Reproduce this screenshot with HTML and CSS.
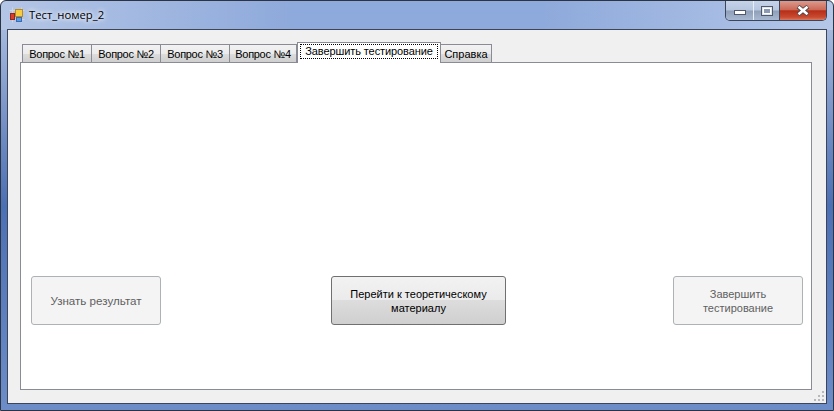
FILE: index.html
```html
<!DOCTYPE html>
<html lang="ru">
<head>
<meta charset="utf-8">
<title>Тест_номер_2</title>
<link rel="stylesheet" href="styles.css">
</head>
<body>
<div class="window">
  <header class="titlebar">
    <svg class="app-icon" width="16" height="16" viewBox="0 0 16 16">
      <path d="M0.5 3.5H15.5M0.5 12.5H15.5M3.5 0.5V15.5M12.5 0.5V15.5" stroke="#d4d4dc" stroke-width="1" fill="none"/>
      <rect x="1.5" y="6.5" width="4" height="6" fill="#e03a2c" stroke="#8c2a20"/>
      <rect x="6.5" y="2.5" width="7" height="7" fill="#f8cc40" stroke="#b88a20"/>
      <rect x="7.5" y="10.5" width="5" height="4" fill="#5a9ae8" stroke="#3a6ab0"/>
    </svg>
    <span class="title">Тест_номер_2</span>
    <div class="caption">
      <div class="cap cap-min"><svg width="12" height="6" viewBox="0 0 12 6"><rect x="0.5" y="0.5" width="11" height="4" fill="#fff" stroke="#50586a"/></svg></div>
      <div class="cap cap-max"><svg width="12" height="10" viewBox="0 0 12 10"><rect x="0.5" y="0.5" width="11" height="9" fill="#dfe5ee" stroke="#50586a"/><rect x="2.5" y="2.5" width="7" height="5" fill="#8a9ab2" stroke="#fff"/></svg></div>
      <div class="cap cap-close"><svg width="14" height="11" viewBox="0 0 14 11"><path d="M2 1.5 L12 9.5 M12 1.5 L2 9.5" stroke="#50484a" stroke-width="4.4" fill="none"/><path d="M2.5 1.8 L11.5 9.2 M11.5 1.8 L2.5 9.2" stroke="#fff" stroke-width="2.6" fill="none"/></svg></div>
    </div>
  </header>
  <main class="client">
    <nav class="tabs">
      <div class="tab t1">Вопрос №1</div>
      <div class="tab t2">Вопрос №2</div>
      <div class="tab t3">Вопрос №3</div>
      <div class="tab t4">Вопрос №4</div>
      <div class="tab active"><span class="focus">Завершить тестирование</span></div>
      <div class="tab t6">Справка</div>
    </nav>
    <section class="panel">
      <button class="btn disabled b1">Узнать результат</button>
      <button class="btn primary b2">Перейти к теоретическому материалу</button>
      <button class="btn disabled b3">Завершить тестирование</button>
    </section>
    <svg class="grip" width="12" height="12" viewBox="0 0 12 12">
      <path d="M9 1h2v2H9zM5 5h2v2H5zM9 5h2v2H9zM1 9h2v2H1zM5 9h2v2H5zM9 9h2v2H9z" fill="#b8b8bc"/>
    </svg>
  </main>
</div>
</body>
</html>
```
FILE: styles.css
```css
* { box-sizing: border-box; }
html, body { margin: 0; height: 100%; overflow: hidden; }
body { width: 834px; height: 411px; background: #fff; font-family: "Liberation Sans", Arial, sans-serif; font-size: 11px; color: #000; }

.window {
  width: 834px; height: 411px;
  display: flex; flex-direction: column;
  border: 1px solid #2c3444;
  border-radius: 6px 6px 0 0;
  padding: 0 6px 6px 6px;
  background:
    linear-gradient(90deg, #b4c6e6 0, #8ea9db 35%, #8ea9db 65%, #b4c7e8 100%) top / 100% 29px no-repeat,
    linear-gradient(180deg, #b4c6e6 0, #7e98ca 25%, #4c70b4 50%, #6d8dc8 100%);
}

.titlebar { height: 28px; flex: none; display: flex; align-items: center; position: relative; padding-left: 2px; }
.app-icon { flex: none; margin-top: -1px; }
.title { margin-left: 4px; font-family: "Open Sans", sans-serif; font-size: 11.3px; margin-top: -2px; color: #000; text-shadow: 0 0 6px #fff, 0 0 4px #fff; white-space: nowrap; }

.caption { margin-left: auto; align-self: flex-start; display: flex; height: 20px; border: 1px solid #3c4658; border-top: 0; border-radius: 0 0 5px 5px; overflow: hidden; }
.cap { display: flex; align-items: center; justify-content: center; height: 100%; }
.cap-min { width: 28px; background: linear-gradient(180deg, #c6d4e8 0, #b6c6de 48%, #8f9fb8 52%, #a8b8d0 100%); border-right: 1px solid #e8eef8; }
.cap-min svg { margin-top: 5px; }
.cap-max { width: 26px; background: linear-gradient(180deg, #c6d4e8 0, #b6c6de 48%, #8f9fb8 52%, #a8b8d0 100%); border-right: 1px solid #3c4658; }
.cap-close { width: 46px; background: linear-gradient(180deg, #dc9a8c 0, #cc6a58 45%, #b82e18 52%, #c84a30 85%, #d87a60 100%); }

.client {
  flex: 1; position: relative;
  background: #f0f0f0;
  border: 1px solid #3c4658;
  padding: 13px 14px 13px 12px;
  display: flex; flex-direction: column;
}

.tabs { height: 20px; flex: none; display: flex; align-items: flex-end; padding-left: 2px; position: relative; z-index: 1; margin-bottom: -1px; white-space: nowrap; }
.tab {
  height: 18px; margin-bottom: 1px;
  display: flex; align-items: center; justify-content: center;
  border: 1px solid #898c95; border-bottom: 0; border-right-width: 0;
  background: linear-gradient(180deg, #f2f2f2 0, #ebebeb 50%, #dddddd 51%, #cfcfcf 100%);
  padding-top: 1px;
}
.t1, .t2, .t3 { width: 69px; letter-spacing: -0.3px; }
.t4 { width: 68px; border-right-width: 1px; letter-spacing: -0.3px; }
.t6 { width: 51px; border-right-width: 1px; border-left: 0; }
.active {
  width: 144px; height: 21px; margin-bottom: 0;
  background: #fff; border-right-width: 1px; padding: 0 2px 3px;
}
.focus { flex: 1; height: 15px; line-height: 13px; text-align: center; border: 1px dotted #000; letter-spacing: -0.1px; }

.panel {
  flex: 1; background: #fff;
  border: 1px solid #898c95;
  padding: 213px 0 0 10px;
  display: flex; align-items: flex-start;
}

.btn {
  height: 49px; font: inherit; padding: 0 12px; line-height: 14px;
  border-radius: 3px; text-align: center;
}
.b1, .b3 { width: 130px; }
.b1 { font-size: 11.6px; }
.b2 { width: 175px; margin: 0 167px 0 170px; }
.disabled { background: #f4f4f4; border: 1px solid #adb2b5; color: #5f5f5f; }
.primary { border: 1px solid #707070; color: #000; background: linear-gradient(180deg, #f2f2f2 0, #ebebeb 48%, #dddddd 49%, #cfcfcf 100%); }

.grip { position: absolute; right: 1px; bottom: 1px; }
```
